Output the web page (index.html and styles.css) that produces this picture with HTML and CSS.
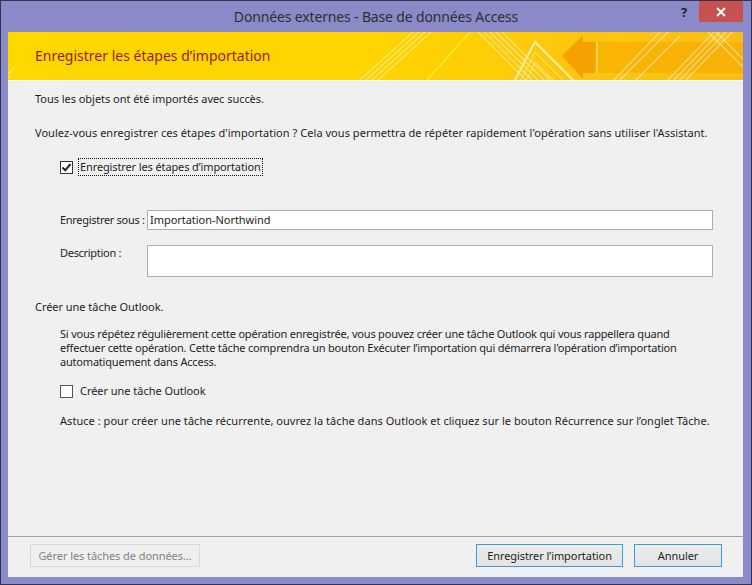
FILE: index.html
```html
<!DOCTYPE html>
<html lang="fr">
<head>
<meta charset="utf-8">
<title>Données externes - Base de données Access</title>
<link rel="stylesheet" href="styles.css">
</head>
<body>
<div class="window">
  <div class="titlebar">
    <div></div>
    <div class="title">Données externes - Base de données Access</div>
    <div class="controls">
      <span class="help">?</span>
      <span class="close"><svg width="10" height="10" viewBox="0 0 10 10"><path d="M1 1 L9 9 M9 1 L1 9" stroke="#fff" stroke-width="2"/></svg></span>
    </div>
  </div>
  <div class="client">
    <div class="banner">
      <svg class="banner-art" width="735" height="48" viewBox="0 0 735 48">
        <defs>
          <linearGradient id="bg" x1="0" y1="0" x2="1" y2="0">
            <stop offset="0" stop-color="#ffd800"/>
            <stop offset="0.5" stop-color="#ffd400"/>
            <stop offset="0.75" stop-color="#fdc80c"/>
            <stop offset="1" stop-color="#fbbd12"/>
          </linearGradient>
        </defs>
        <rect width="735" height="48" fill="url(#bg)"/>
        <g stroke="#ffffff" stroke-opacity="0.4" stroke-width="1.5">
          <path d="M0 46 L3 43 M0 42 L6 36"/>
          <path d="M352 48 L405 0 M358 48 L411 0 M364 48 L417 0 M370 48 L423 0"/>
        </g>
        <path d="M419 48 L462 0" stroke="#ffe81a" stroke-width="2"/>
        <g stroke="#ffffff" stroke-opacity="0.4" stroke-width="1.5">
          <path d="M470 0 L518 48 M476 0 L524 48 M482 0 L530 48 M488 0 L536 48 M494 0 L542 48"/>
        </g>
        <path d="M507 48 L527 10 L565 48" stroke="#ffeeb0" stroke-opacity="0.95" stroke-width="2" fill="none"/>
        <g stroke="#ffffff" stroke-opacity="0.35" stroke-width="1.3" fill="none">
          <path d="M513 48 L527 20 L555 48 M519 48 L527 30 L545 48"/>
        </g>
        <rect x="575" y="10" width="160" height="31" fill="#f6a800" fill-opacity="0.55"/>
        <path d="M554 24 L575 3 L575 47 Z" fill="#f29a00" fill-opacity="0.85"/>
        <rect x="575" y="10" width="12" height="31" fill="#f29a00" fill-opacity="0.7"/>
        <path d="M589 10 L589 41" stroke="#ffd860" stroke-width="1.5"/>
        <g stroke="#ffffff" stroke-opacity="0.4" stroke-width="1.5">
          <path d="M628 48 L672 4 M606 48 L652 0 M612 48 L660 0"/>
          <path d="M660 48 L706 0 M666 48 L712 0 M672 48 L718 0 M678 48 L724 0"/>
          <path d="M700 0 L735 35 M708 0 L735 27"/>
        </g>
      </svg>
      <h1 class="banner-title">Enregistrer les étapes d’importation</h1>
    </div>
    <div class="content">
      <p class="line">Tous les objets ont été importés avec succès.</p>
      <p class="line gap18 wide">Voulez-vous enregistrer ces étapes d'importation ? Cela vous permettra de répéter rapidement l'opération sans utiliser l'Assistant.</p>
      <div class="check check-save">
        <span class="box"><svg width="11" height="11" viewBox="0 0 11 11"><path d="M1.5 5.5 L4.3 8.3 L9.5 2" stroke="#222" stroke-width="2" fill="none"/></svg></span>
        <span class="focus">Enregistrer les étapes d’importation</span>
      </div>
      <div class="field field-name">
        <span class="flabel">Enregistrer sous :</span>
        <div class="input">Importation-Northwind</div>
      </div>
      <div class="field field-desc">
        <span class="flabel">Description :</span>
        <div class="input textarea"></div>
      </div>
      <p class="line section">Créer une tâche Outlook.</p>
      <p class="para">Si vous répétez régulièrement cette opération enregistrée, vous pouvez créer une tâche Outlook qui vous rappellera quand<br>effectuer cette opération. Cette tâche comprendra un bouton Exécuter l’importation qui démarrera l'opération d’importation<br>automatiquement dans Access.</p>
      <div class="check check-task">
        <span class="box"></span>
        <span class="check-label">Créer une tâche Outlook</span>
      </div>
      <p class="line tip wide">Astuce : pour créer une tâche récurrente, ouvrez la tâche dans Outlook et cliquez sur le bouton Récurrence sur l’onglet Tâche.</p>
    </div>
    <div class="footer">
      <button class="btn btn-disabled" type="button">Gérer les tâches de données...</button>
      <span class="spacer"></span>
      <button class="btn btn-focus btn-save" type="button">Enregistrer l’importation</button>
      <button class="btn btn-focus btn-cancel" type="button">Annuler</button>
    </div>
  </div>
</div>
</body>
</html>
```

FILE: styles.css
```css
html, body {
  margin: 0;
  padding: 0;
}
body {
  font-family: "Noto Sans", "Open Sans", sans-serif;
  font-size: 11px;
  letter-spacing: -0.04px;
  color: #1e1e1e;
  width: 752px;
  height: 585px;
  overflow: hidden;
}
.window {
  width: 752px;
  height: 585px;
  box-sizing: border-box;
  border: 1px solid #33334a;
  background: #8a8ac9;
  display: flex;
  flex-direction: column;
}
.titlebar {
  height: 31px;
  flex: none;
  display: grid;
  grid-template-columns: 1fr auto 1fr;
  align-items: start;
}
.title {
  font-size: 14px;
  letter-spacing: -0.15px;
  line-height: 31px;
  color: #2e2e2e;
  white-space: nowrap;
}
.controls {
  justify-self: end;
  display: flex;
  align-items: flex-start;
  margin-right: 8px;
}
.help {
  width: 14px;
  margin-right: 8px;
  font-weight: bold;
  font-size: 13px;
  line-height: 22px;
  color: #222;
  text-align: center;
}
.close {
  width: 44px;
  height: 21px;
  background: #c75050;
  display: flex;
  align-items: center;
  justify-content: center;
}
.client {
  flex: 1;
  margin: 0 8px 7px 7px;
  background: #f0f0f0;
  display: flex;
  flex-direction: column;
}
.banner {
  position: relative;
  height: 48px;
  flex: none;
  border-bottom: 1px solid #fbfbfb;
  display: flex;
  align-items: center;
  overflow: hidden;
}
.banner-art {
  position: absolute;
  left: 0;
  top: 0;
}
.banner-title {
  position: relative;
  margin: 0 0 0 27px;
  font-size: 14px;
  letter-spacing: 0;
  font-weight: normal;
  color: #9a1a00;
  line-height: 20px;
}
.content {
  flex: 1;
  padding: 10px 27px 0 27px;
}
.line {
  margin: 0;
  line-height: 16px;
  white-space: nowrap;
}
.wide {
  letter-spacing: 0.04px;
}
.gap18 {
  margin-top: 18px;
}
.check {
  display: flex;
  align-items: center;
  margin-left: 25px;
}
.box {
  width: 13px;
  height: 13px;
  box-sizing: border-box;
  border: 1px solid #333;
  background: #fff;
  display: flex;
  align-items: center;
  justify-content: center;
}
.check-save {
  margin-top: 17px;
  height: 18px;
}
.focus {
  margin-left: 5px;
  border: 1px dotted #111;
  padding: 0 1px;
  line-height: 16px;
  letter-spacing: -0.12px;
}
.check-task {
  margin-top: 14px;
  height: 16px;
}
.check-task .box {
  border-color: #555;
}
.check-label {
  margin-left: 7px;
  line-height: 16px;
}
.field {
  display: flex;
  margin-left: 25px;
}
.field-name {
  margin-top: 34px;
  align-items: center;
}
.field-desc {
  margin-top: 15px;
  align-items: flex-start;
}
.flabel {
  width: 87px;
  flex: none;
  line-height: 16px;
  white-space: nowrap;
  letter-spacing: -0.3px;
}
.input {
  width: 566px;
  height: 20px;
  box-sizing: border-box;
  border: 1px solid #abadb3;
  background: #fff;
  padding: 0 2px;
  line-height: 18px;
}
.textarea {
  height: 32px;
}
.section {
  margin-top: 22px;
}
.para {
  margin: 12px 0 0 25px;
  line-height: 14px;
  white-space: nowrap;
  letter-spacing: -0.2px;
}
.tip {
  margin-top: 14px;
  margin-left: 25px;
}
.footer {
  flex: none;
  border-top: 1px solid #a0a0a0;
  padding: 7px 21px 10px 22px;
  display: flex;
  align-items: center;
}
.spacer {
  flex: 1;
}
.btn {
  height: 23px;
  box-sizing: border-box;
  font-family: "Noto Sans", "Open Sans", sans-serif;
  font-size: 11px;
  letter-spacing: -0.07px;
  white-space: nowrap;
  color: #1e1e1e;
  border: 1px solid #acacac;
  background: linear-gradient(#ececec, #e3e3e3);
  padding: 0;
  margin: 0;
}
.btn-disabled {
  width: 170px;
  color: #838383;
  border-color: #d9d9d9;
  background: #efefef;
}
.btn-focus {
  border-color: #3c9be8;
}
.btn-save {
  width: 147px;
}
.btn-cancel {
  width: 88px;
  margin-left: 11px;
}
```
